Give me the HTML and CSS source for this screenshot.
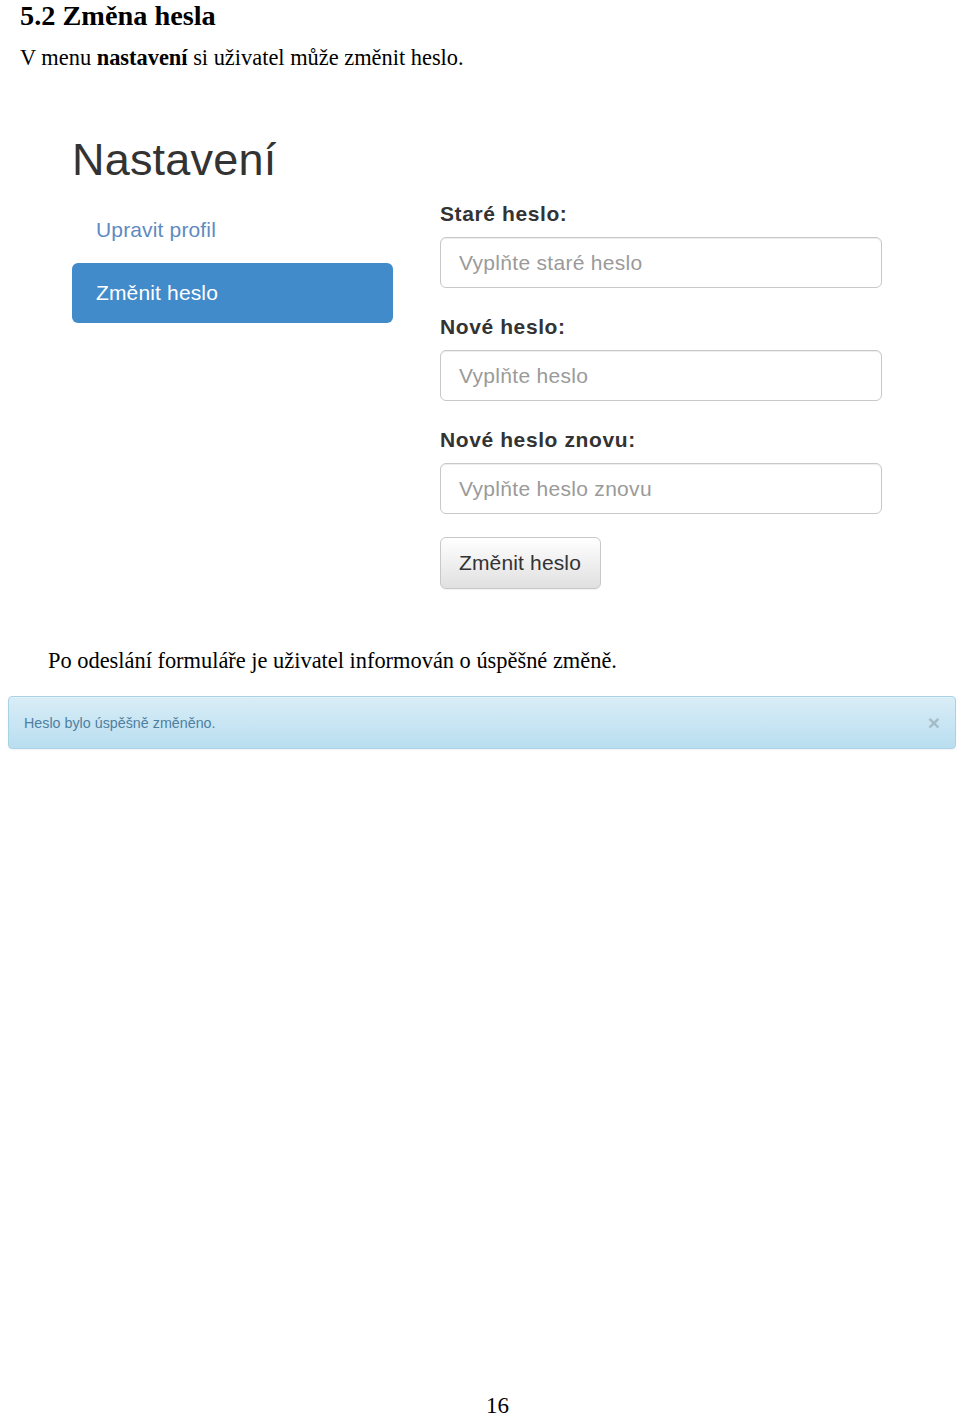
FILE: index.html
```html
<!DOCTYPE html>
<html lang="cs">
<head>
<meta charset="utf-8">
<title>5.2 Změna hesla</title>
<link rel="stylesheet" href="styles.css">
</head>
<body>
<div class="page">
  <h1 class="doc-title">5.2 Změna hesla</h1>
  <p class="doc-text">V menu <b>nastavení</b> si uživatel může změnit heslo.</p>

  <div class="shot">
    <h2 class="shot-title">Nastavení</h2>
    <div class="shot-row">
      <ul class="pills">
        <li class="pill"><a href="#">Upravit profil</a></li>
        <li class="pill active"><a href="#">Změnit heslo</a></li>
      </ul>
      <form class="form">
        <div class="form-group">
          <label class="label">Staré heslo:</label>
          <div class="input"><span class="placeholder">Vyplňte staré heslo</span></div>
        </div>
        <div class="form-group">
          <label class="label">Nové heslo:</label>
          <div class="input"><span class="placeholder">Vyplňte heslo</span></div>
        </div>
        <div class="form-group">
          <label class="label">Nové heslo znovu:</label>
          <div class="input"><span class="placeholder">Vyplňte heslo znovu</span></div>
        </div>
        <div class="btn">Změnit heslo</div>
      </form>
    </div>
  </div>

  <p class="doc-text indent">Po odeslání formuláře je uživatel informován o úspěšné změně.</p>

  <div class="alert">
    <span class="alert-text">Heslo bylo úspěšně změněno.</span>
    <span class="close">×</span>
  </div>

  <div class="page-num">16</div>
</div>
</body>
</html>
```
FILE: styles.css
```css
html, body {
  margin: 0;
  padding: 0;
  background: #fff;
}

.page {
  height: 1418px;
  display: flex;
  flex-direction: column;
  font-family: "Liberation Serif", "Times New Roman", serif;
  color: #000;
  overflow: hidden;
}

.doc-title {
  margin: 0 0 0 20px;
  font-size: 28.3px;
  line-height: normal;
  font-weight: bold;
}

.doc-text {
  margin: 13px 0 0 20px;
  font-size: 22.4px;
  line-height: 26px;
}

.doc-text b {
  font-weight: bold;
}

.shot {
  margin: 64px 0 0 72px;
  font-family: "Liberation Sans", Arial, sans-serif;
  color: #333;
}

.shot-title {
  margin: 0 0 14px 0;
  font-size: 45px;
  line-height: 49px;
  font-weight: normal;
  color: #333;
  letter-spacing: 0.2px;
}

.shot-row {
  display: grid;
  grid-template-columns: 321px 442px;
  column-gap: 47px;
  align-items: start;
}

.pills {
  list-style: none;
  margin: 0;
  padding: 2px 0 0 0;
  display: flex;
  flex-direction: column;
  gap: 3px;
}

.pill a {
  display: block;
  padding: 15px 22px 15px 24px;
  font-size: 21px;
  line-height: 30px;
  letter-spacing: 0.15px;
  color: #5f8ac0;
  text-decoration: none;
  border-radius: 6px;
}

.pill.active a {
  background: #428bca;
  color: #fff;
}

.form {
  display: flex;
  flex-direction: column;
  gap: 23px;
}

.form-group {
  display: flex;
  flex-direction: column;
  gap: 7px;
}

.label {
  font-size: 21px;
  line-height: 32px;
  font-weight: bold;
  letter-spacing: 0.6px;
  color: #333;
}

.input {
  box-sizing: border-box;
  height: 51px;
  padding: 0 18px;
  border: 1px solid #c8c8c8;
  border-radius: 6px;
  box-shadow: inset 0 1px 1px rgba(0, 0, 0, 0.075);
  display: flex;
  align-items: center;
  background: #fff;
}

.placeholder {
  font-size: 21px;
  letter-spacing: 0.3px;
  color: #9a9a9a;
}

.btn {
  box-sizing: border-box;
  align-self: flex-start;
  width: 161px;
  height: 52px;
  padding: 0 18px;
  display: flex;
  align-items: center;
  font-size: 21px;
  letter-spacing: 0.15px;
  color: #333;
  border: 1px solid #c8c8c8;
  border-radius: 6px;
  background: linear-gradient(to bottom, #ffffff 0%, #e0e0e0 100%);
  box-shadow: 0 1px 1px rgba(0, 0, 0, 0.06);
}

.indent {
  margin: 59px 0 0 48px;
}

.alert {
  box-sizing: border-box;
  margin: 22px 4px 0 8px;
  height: 53px;
  padding: 0 15px;
  display: flex;
  align-items: center;
  justify-content: space-between;
  border: 1px solid #a9d2e4;
  border-radius: 4px;
  background: linear-gradient(to bottom, #d9edf7 0%, #b9def0 100%);
  font-family: "Liberation Sans", Arial, sans-serif;
  box-shadow: inset 0 1px 0 rgba(255, 255, 255, 0.25), 0 1px 2px rgba(0, 0, 0, 0.05);
}

.alert-text {
  font-size: 14.3px;
  line-height: 20px;
  color: #4f7f9f;
}

.close {
  font-size: 21px;
  line-height: 20px;
  font-weight: bold;
  color: #000;
  opacity: 0.18;
}

.page-num {
  margin-top: auto;
  padding-left: 35px;
  text-align: center;
  font-size: 23px;
  line-height: 24px;
}
```
